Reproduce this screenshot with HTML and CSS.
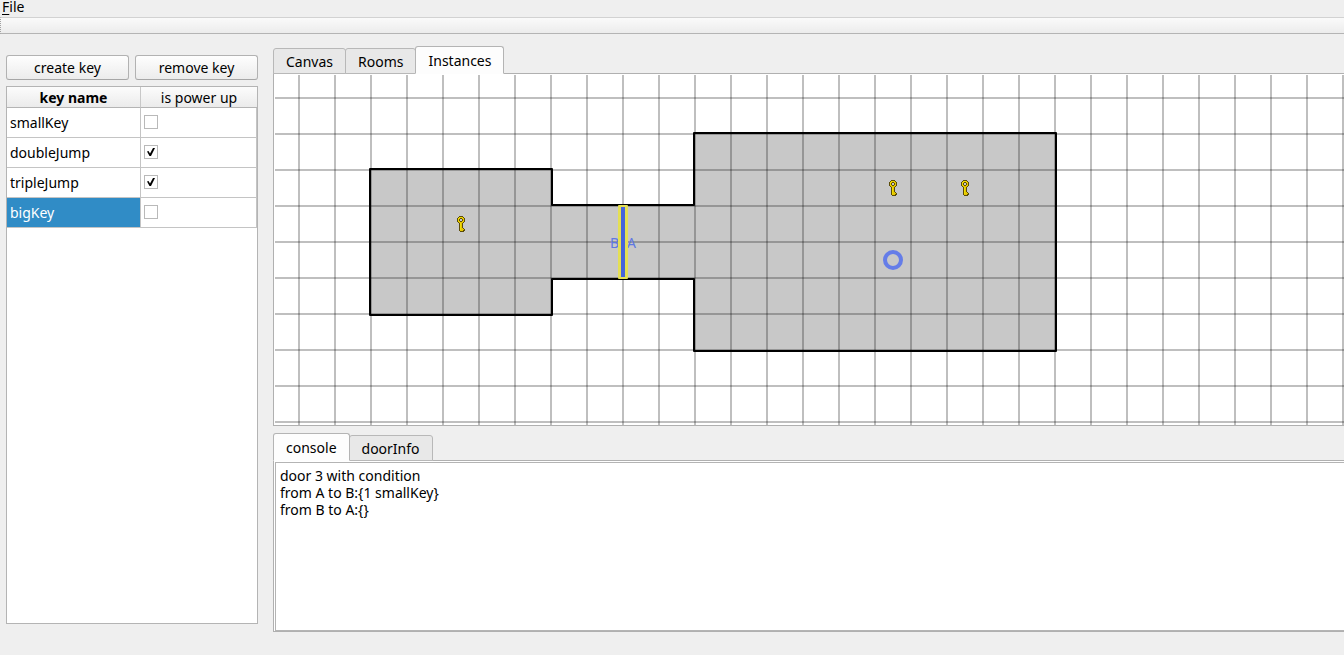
FILE: index.html
```html
<!DOCTYPE html>
<html lang="en">
<head>
<meta charset="utf-8">
<title>Key editor</title>
<link rel="stylesheet" href="styles.css">
</head>
<body>
<nav class="menubar"><button class="menu" type="button"><u>F</u>ile</button></nav>
<div class="toolbar" role="toolbar"></div>
<main class="workspace">
  <aside class="sidebar">
    <div class="actions">
      <button class="push" type="button">create key</button>
      <button class="push" type="button">remove key</button>
    </div>
    <div class="table-frame">
      <table class="keys">
        <thead><tr><th class="name-col current">key name</th><th>is power up</th></tr></thead>
        <tbody>
          <tr><td>smallKey</td><td><input class="check" type="checkbox" aria-label="smallKey is power up"></td></tr>
          <tr><td>doubleJump</td><td><input class="check" type="checkbox" aria-label="doubleJump is power up" checked></td></tr>
          <tr><td>tripleJump</td><td><input class="check" type="checkbox" aria-label="tripleJump is power up" checked></td></tr>
          <tr><td class="selected">bigKey</td><td><input class="check" type="checkbox" aria-label="bigKey is power up"></td></tr>
        </tbody>
      </table>
    </div>
  </aside>
  <div class="content">
    <section class="panel panel-map">
      <div class="tabs" role="tablist">
        <button class="tab" role="tab" type="button">Canvas</button>
        <button class="tab" role="tab" type="button">Rooms</button>
        <button class="tab active" role="tab" type="button" aria-selected="true">Instances</button>
      </div>
      <div class="pane">
        <svg class="map" width="100%" height="100%" aria-label="Room map">
          <defs>
            <pattern id="columns" x="23" y="0" width="36" height="36" patternUnits="userSpaceOnUse"><rect class="grid-line" width="2" height="36"/></pattern>
            <pattern id="rows" x="0" y="22" width="36" height="36" patternUnits="userSpaceOnUse"><rect class="grid-line" width="36" height="2"/></pattern>
            <symbol id="key" width="8" height="16" viewBox="0 0 8 16" shape-rendering="crispEdges">
              <path fill="#5b4c08" d="M2 0h4v1h1v1h1v4h-1v1h-1v5h1v1h1v2h-1v1h-4v-1h-1v-8h-1v-1h-1v-4h1v-1h1z"/>
              <path fill="#e5c700" d="M2 1h4v1h1v4h-1v1h-1v5h1v1h1v1h-1v1h-3v-8h-1v-1h-1v-4h1z"/>
              <path fill="#f2dc00" d="M2 1h3v1h-3zM1 2h1v3h-1zM3 7h1v7h-1z"/>
              <path fill="#5b4c08" d="M3 2h2v1h1v2h-1v1h-2v-1h-1v-2h1z"/>
              <path fill="#c8c8c8" d="M3 3h2v2h-2z"/>
            </symbol>
          </defs>
          <path class="room-fill" d="M95 94H277V130H419V58H781V276H419V204H277V240H95Z"/>
          <rect width="100%" height="100%" fill="url(#columns)"/>
          <rect width="100%" height="100%" fill="url(#rows)"/>
          <path class="room-wall" d="M95 94H277V130H419V58H781V276H419V204H277V240H95Z"/>
          <text class="door-label" x="335" y="173">B</text>
          <text class="door-label" x="352" y="173">A</text>
          <rect class="door-glow" x="343" y="130" width="10" height="74" rx="1"/>
          <rect class="door" x="346" y="132" width="4" height="70"/>
          <circle class="start" cx="618" cy="185" r="8"/>
          <use href="#key" x="182" y="141"/>
          <use href="#key" x="614" y="105"/>
          <use href="#key" x="686" y="105"/>
        </svg>
      </div>
    </section>
    <section class="panel panel-log">
      <div class="tabs" role="tablist">
        <button class="tab active" role="tab" type="button" aria-selected="true">console</button>
        <button class="tab" role="tab" type="button">doorInfo</button>
      </div>
      <div class="pane">
        <div class="console">door 3 with condition<br>from A to B:{1 smallKey}<br>from B to A:{}</div>
      </div>
    </section>
  </div>
</main>
</body>
</html>
```
FILE: styles.css
```css
* { box-sizing: border-box; }
body {
  margin: 0;
  height: 100vh;
  display: flex;
  flex-direction: column;
  overflow: hidden;
  background: #efefef;
  color: #000;
  font: 14px/17px "Noto Sans", "Open Sans", sans-serif;
}
button { font: inherit; color: inherit; }
.menubar { height: 17px; display: flex; align-items: flex-start; }
.menu { border: 0; padding: 0 2px; background: none; line-height: 14px; }
.menu u { text-underline-offset: 2px; }
.toolbar {
  height: 17px;
  border-top: 1px solid #d2d2d2;
  border-bottom: 1px solid #b4b4b4;
  border-left: 1px dotted #a0a0a0;
  background: linear-gradient(#fafafa, #ececec);
}
.workspace { flex: 1; min-height: 0; display: flex; gap: 15px; padding-left: 6px; }
.sidebar { width: 252px; padding: 21px 0 31px; display: flex; flex-direction: column; gap: 6px; }
.actions { display: flex; gap: 6px; }
.push {
  flex: 1;
  height: 25px;
  padding: 0;
  border: 1px solid #b2b2b2;
  border-bottom-color: #a6a6a6;
  border-radius: 3px;
  background: linear-gradient(#fefefe, #ececec);
}
.table-frame { flex: 1; border: 1px solid #b4b4b4; background: #fff; }
.keys { width: 100%; border-collapse: separate; border-spacing: 0; table-layout: fixed; }
.keys th {
  height: 21px;
  padding: 0;
  font-weight: 400;
  border-bottom: 1px solid #b4b4b4;
  background: linear-gradient(#fcfcfc, #ebebeb);
}
.keys .name-col { width: 134px; border-right: 1px solid #c8c8c8; }
.keys .current { font-weight: 700; }
.keys td {
  height: 30px;
  padding: 0 3px 1px;
  border-right: 1px solid #c4c4c4;
  border-bottom: 1px solid #c4c4c4;
}
.keys .selected { background: #308cc6; color: #fff; }
.check {
  appearance: none;
  display: block;
  width: 14px;
  height: 14px;
  margin: 0;
  border: 1px solid #b9b9b9;
  background: #fff;
}
.check:checked {
  background: #fff url("data:image/svg+xml,%3Csvg xmlns='http://www.w3.org/2000/svg' viewBox='0 0 12 12'%3E%3Cpath d='M2 5.5L3.5 5L5 7.5L8 2H10L6 10H4.5Z'/%3E%3C/svg%3E");
}
.content { flex: 1; min-width: 0; padding: 12px 0 23px; display: flex; flex-direction: column; gap: 7px; }
.panel { display: flex; flex-direction: column; }
.panel-map { flex: 1; min-height: 0; }
.tabs { height: 28px; display: flex; align-items: flex-end; margin-bottom: -1px; z-index: 1; }
.tab {
  height: 26px;
  padding: 0 12px;
  margin-right: -1px;
  border: 1px solid #b8b8b8;
  border-radius: 3px 3px 0 0;
  background: #e8e8e8;
}
.tab.active {
  height: 28px;
  border-color: #b4b4b4;
  border-bottom-color: #fdfdfd;
  background: #fdfdfd;
  z-index: 1;
}
.pane { border: 1px solid #b0b0b0; border-right: 0; background: #fff; }
.panel-map .pane { flex: 1; min-height: 0; padding: 1px 0 0 1px; }
.panel-log .pane { height: 172px; padding: 1px 0 0 1px; }
.map { display: block; }
.grid-line { fill: #000; fill-opacity: .25; }
.room-fill { fill: #c8c8c8; }
.room-wall { fill: none; stroke: #000; stroke-width: 2; stroke-linejoin: round; }
.door-glow { fill: #e4df55; }
.door { fill: #4664dc; }
.door-label { fill: #5f78e2; font-size: 14px; }
.start { fill: none; stroke: #657de8; stroke-width: 4; }
.console { height: 100%; padding: 4px; border: 1px solid #b4b4b4; border-right: 0; }
```
